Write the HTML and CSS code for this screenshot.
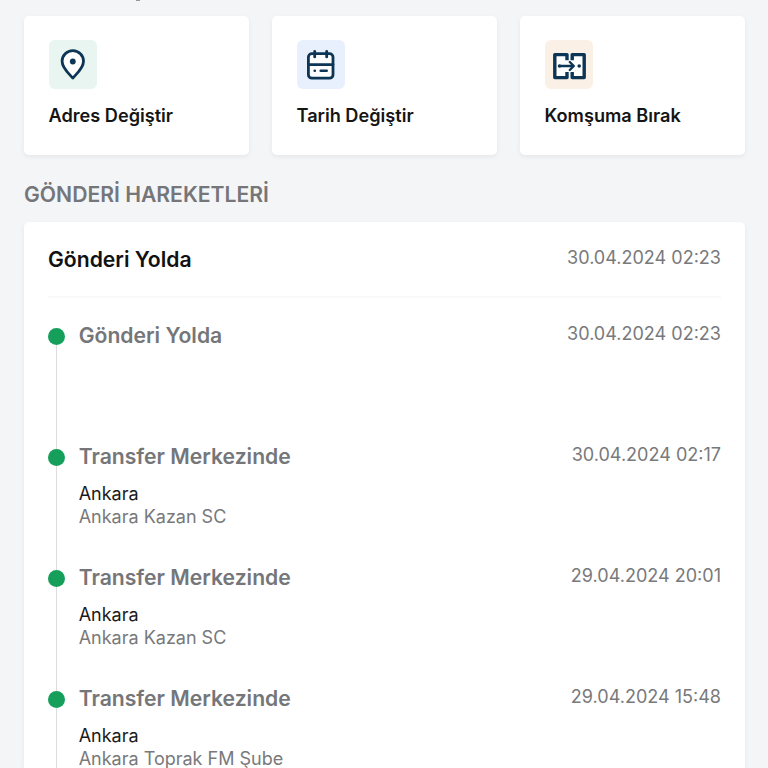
FILE: index.html
```
<!DOCTYPE html>
<html lang="tr">
<head>
  <meta charset="UTF-8" />
  <meta name="viewport" content="width=device-width, initial-scale=1" />
  <title>Gönderi Takip</title>
  <link rel="stylesheet" href="styles.css">
</head>
<body>

<div class="page">

  <!-- Tail of the section above -->
  <div class="prev-section"><span class="prev-tail"></span></div>

  <!-- Quick actions -->
  <div class="actions">
    <div class="action-card">
      <div class="action-icon green">
        <svg width="48" height="48" viewBox="0 0 48 48">
          <path d="M23.8 38C19.8 33.6 13.1 28.2 13.1 21.3a10.7 10.7 0 0 1 21.4 0C34.5 28.2 27.8 33.6 23.8 38z" fill="#fff" stroke="#0d3555" stroke-width="2.8" stroke-linejoin="round" />
          <circle cx="23.8" cy="21.5" r="2.9" fill="#0d3555" />
        </svg>
      </div>
      <div class="action-title">Adres Değiştir</div>
    </div>

    <div class="action-card">
      <div class="action-icon blue">
        <svg width="48" height="48" viewBox="0 0 48 48" fill="none" stroke="#0d3555" stroke-width="2.8" stroke-linecap="round">
          <rect x="11.4" y="13.6" width="24.6" height="24.6" rx="3.5" fill="#fff" />
          <path d="M11.5 24.6h24.5M17.7 11.3v5.6M29.7 11.3v5.6" />
          <path d="M17.7 30.7h.1M23.7 30.7h6" stroke-width="2.6" />
        </svg>
      </div>
      <div class="action-title">Tarih Değiştir</div>
    </div>

    <div class="action-card">
      <div class="action-icon orange">
        <svg width="48" height="48" viewBox="0 0 48 48" fill="none" stroke="#0d3555" stroke-width="3.4" stroke-linejoin="round">
          <path d="M10 14.4h28.5v23H10z" fill="#fff" stroke="none" />
          <path d="M22 20.2v-5.6H9.8v23H22V32M27.2 20.2v-5.6h12v23h-12V32" />
          <path d="M15 26h13M24.8 22l4 4-4 4" stroke-width="2.4" stroke-linecap="round" />
          <circle cx="14.5" cy="26" r="1.8" fill="#0d3555" stroke="none" />
          <circle cx="34.2" cy="26" r="1.8" fill="#0d3555" stroke="none" />
        </svg>
      </div>
      <div class="action-title">Komşuma Bırak</div>
    </div>
  </div>

  <h2 class="section-title">GÖNDERİ HAREKETLERİ</h2>

  <!-- Shipment history -->
  <div class="history">
    <div class="history-head">
      <div class="status">Gönderi Yolda</div>
      <div class="date">30.04.2024 02:23</div>
    </div>

    <div class="step">
      <div class="rail"><span class="dot"></span></div>
      <div class="step-body">
        <div class="step-title">Gönderi Yolda</div>
      </div>
      <div class="date">30.04.2024 02:23</div>
    </div>

    <div class="step">
      <div class="rail"><span class="dot"></span></div>
      <div class="step-body">
        <div class="step-title">Transfer Merkezinde</div>
        <div class="city">Ankara</div>
        <div class="branch">Ankara Kazan SC</div>
      </div>
      <div class="date">30.04.2024 02:17</div>
    </div>

    <div class="step">
      <div class="rail"><span class="dot"></span></div>
      <div class="step-body">
        <div class="step-title">Transfer Merkezinde</div>
        <div class="city">Ankara</div>
        <div class="branch">Ankara Kazan SC</div>
      </div>
      <div class="date">29.04.2024 20:01</div>
    </div>

    <div class="step last">
      <div class="rail"><span class="dot"></span></div>
      <div class="step-body">
        <div class="step-title">Transfer Merkezinde</div>
        <div class="city">Ankara</div>
        <div class="branch">Ankara Toprak FM Şube</div>
      </div>
      <div class="date">29.04.2024 15:48</div>
    </div>
  </div>

</div>

</body>
</html>
```
FILE: styles.css
```
* {
  box-sizing: border-box;
}

html, body {
  margin: 0;
  padding: 0;
  height: 768px;
  overflow: hidden;
  background: #f4f5f7;
  font-family: Inter, sans-serif;
}

.page {
  padding: 0 23px 0 24px;
}

.prev-section {
  height: 16px;
  padding-left: 112px;
}

.prev-tail {
  display: block;
  width: 4px;
  height: 1px;
  background: #97989a;
}

/* Quick actions */
.actions {
  display: grid;
  grid-template-columns: repeat(3, 1fr);
  gap: 23px;
}

.action-card {
  height: 139.4px;
  padding: 24px 24.5px;
  background: #fff;
  border-radius: 5px;
  box-shadow: 0 2px 5px rgba(0, 0, 0, 0.06);
}

.action-icon {
  width: 48.5px;
  height: 49px;
  border-radius: 6px;
}

.action-icon svg {
  display: block;
}

.green { background: #e8f5f0; }
.blue { background: #e8f0fd; }
.orange { background: #fbf0e6; }

.action-title {
  margin-top: 14px;
  font-size: 18.15px;
  line-height: 24px;
  font-weight: 600;
  color: #151515;
  white-space: nowrap;
}

.section-title {
  margin: 23.6px 0 11px;
  font-size: 21.15px;
  line-height: 32px;
  font-weight: 600;
  color: #757679;
}

/* Shipment history */
.history {
  height: 546px;
  padding: 0 24px;
  overflow: hidden;
  background: #fff;
  border-radius: 5px 5px 0 0;
  box-shadow: 0 2px 5px rgba(0, 0, 0, 0.06);
}

.history-head {
  display: flex;
  justify-content: space-between;
  height: 76px;
  padding-top: 22px;
  margin-bottom: 22px;
  border-bottom: 2px solid #f9f9fa;
}

.status,
.step-title {
  font-size: 21.15px;
  line-height: 32px;
  font-weight: 600;
  color: #111;
}

.date {
  padding-top: 1px;
  font-size: 18.05px;
  line-height: 26px;
  color: #78797b;
}

.step {
  display: flex;
  height: 120.9px;
}

.step.last {
  height: 85px;
}

/* Dot with the line running down to the next one */
.rail {
  display: flex;
  flex-direction: column;
  align-items: center;
  width: 17px;
  margin-right: 13.7px;
  padding-top: 8px;
}

.rail::after {
  content: "";
  width: 1px;
  flex: 1;
  margin-bottom: -8px;
  background: #dcdddd;
}

.last .rail::after {
  margin-bottom: 0;
}

.dot {
  width: 17px;
  height: 17px;
  flex-shrink: 0;
  border-radius: 50%;
  background: #169f5b;
}

.step-body {
  flex: 1;
}

.step-title {
  color: #757679;
}

.city,
.branch {
  font-size: 18px;
  line-height: 23px;
}

.city {
  margin-top: 9px;
  color: #1b1b1b;
}

.branch {
  color: #78797b;
}
```
